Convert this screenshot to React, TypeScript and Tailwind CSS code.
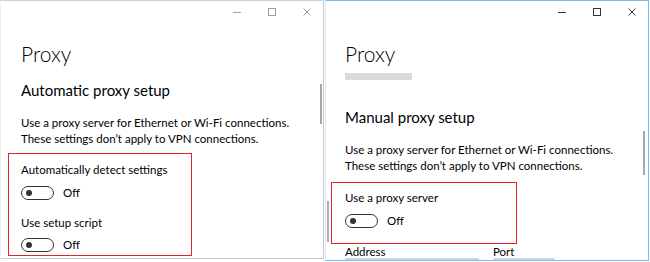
import React from "react";

const font = { fontFamily: 'Lato, "Open Sans", sans-serif' };

function Controls({ color }: { color: string }) {
  return (
    <div className="flex h-[22px] items-center justify-end pr-[12px]">
      <svg width="8" height="8" viewBox="0 0 8 8" className="mr-[27px]">
        <line x1="0" y1="4.5" x2="8" y2="4.5" stroke={color} strokeWidth="1" />
      </svg>
      <svg width="8" height="8" viewBox="0 0 8 8" className="mr-[27px]">
        <rect x="0.5" y="0.5" width="7" height="7" fill="none" stroke={color} strokeWidth="1" />
      </svg>
      <svg width="8" height="8" viewBox="0 0 8 8">
        <line x1="0.5" y1="0.5" x2="7.5" y2="7.5" stroke={color} strokeWidth="1" />
        <line x1="7.5" y1="0.5" x2="0.5" y2="7.5" stroke={color} strokeWidth="1" />
      </svg>
    </div>
  );
}

function Toggle() {
  return (
    <div className="flex h-[14px] items-center">
      <div className="relative h-[14px] w-[33px] rounded-full border-[1.5px] border-[#333]">
        <div className="absolute left-[4px] top-[2.5px] h-[6px] w-[6px] rounded-full bg-[#333]" />
      </div>
      <span className="ml-[9px] text-[11.5px] leading-[14px] text-black">Off</span>
    </div>
  );
}

export default function App() {
  return (
    <div className="flex h-[262px] w-[650px] overflow-hidden bg-white" style={font}>
      {/* Left window */}
      <div className="relative h-[259px] w-[324px] overflow-hidden border-b border-l border-r border-t border-b-[#c9c9c9] border-l-[#f0f0f0] border-r-[#c9c9c9] border-t-[#d0d0d0]">
        <Controls color="#a0a0a0" />
        <div className="pl-[20px]">
          <div className="mt-[17px] text-[21px] font-light leading-[28px] text-black">Proxy</div>
          <div className="mt-[12px] whitespace-nowrap text-[15px] leading-[20px] text-black">Automatic proxy setup</div>
          <div className="mt-[15px] whitespace-nowrap text-[11.5px] leading-[16px] text-black">
            Use a proxy server for Ethernet or Wi-Fi connections.
            <br />
            These settings don’t apply to VPN connections.
          </div>
        </div>
        <div className="ml-[7px] mt-[6px] h-[103px] w-[184px] border border-[#e8202a] pl-[12px]">
          <div className="mt-[8px] whitespace-nowrap text-[11.5px] leading-[16px] text-black">Automatically detect settings</div>
          <div className="mt-[8px]">
            <Toggle />
          </div>
          <div className="mt-[15px] text-[11.5px] leading-[16px] text-black">Use setup script</div>
          <div className="mt-[7px]">
            <Toggle />
          </div>
        </div>
        <div className="absolute right-[1px] top-[83px] h-[40px] w-[2px] bg-[#a8a8a8]" />
      </div>

      {/* Right window */}
      <div className="relative ml-[1px] h-[261px] w-[324px] overflow-hidden border border-[#7cbaf2] border-l-[#dbeafa]">
        <Controls color="#333" />
        <div className="pl-[19px]">
          <div className="mt-[17px] text-[21px] font-light leading-[28px] text-black">Proxy</div>
          <div className="mt-[5px] h-[7px] w-[67px] bg-[#dadada]" />
          <div className="mt-[27px] whitespace-nowrap text-[15px] leading-[20px] text-black">Manual proxy setup</div>
          <div className="mt-[15px] whitespace-nowrap text-[11.5px] leading-[16px] text-black">
            Use a proxy server for Ethernet or Wi-Fi connections.
            <br />
            These settings don’t apply to VPN connections.
          </div>
        </div>
        <div className="ml-[5px] mt-[8px] h-[62px] w-[186px] border border-[#e8202a] pl-[13px]">
          <div className="mt-[7px] text-[11.5px] leading-[16px] text-black">Use a proxy server</div>
          <div className="mt-[8px]">
            <Toggle />
          </div>
        </div>
        <div className="mt-[1px] flex pl-[19px]">
          <div className="w-[148px]">
            <div className="text-[11.5px] leading-[13px] text-black">Address</div>
            <div className="h-[2px] w-[134px] bg-[#c8d8e8]" />
          </div>
          <div>
            <div className="text-[11.5px] leading-[13px] text-black">Port</div>
            <div className="h-[2px] w-[62px] bg-[#c8d8e8]" />
          </div>
        </div>
        <div className="absolute right-[3px] top-[130px] h-[44px] w-[2px] bg-[#a8a8a8]" />
        <div className="absolute left-[1px] top-[200px] h-[41px] w-[2px] bg-[#b0b0b0]" />
      </div>
    </div>
  );
}
